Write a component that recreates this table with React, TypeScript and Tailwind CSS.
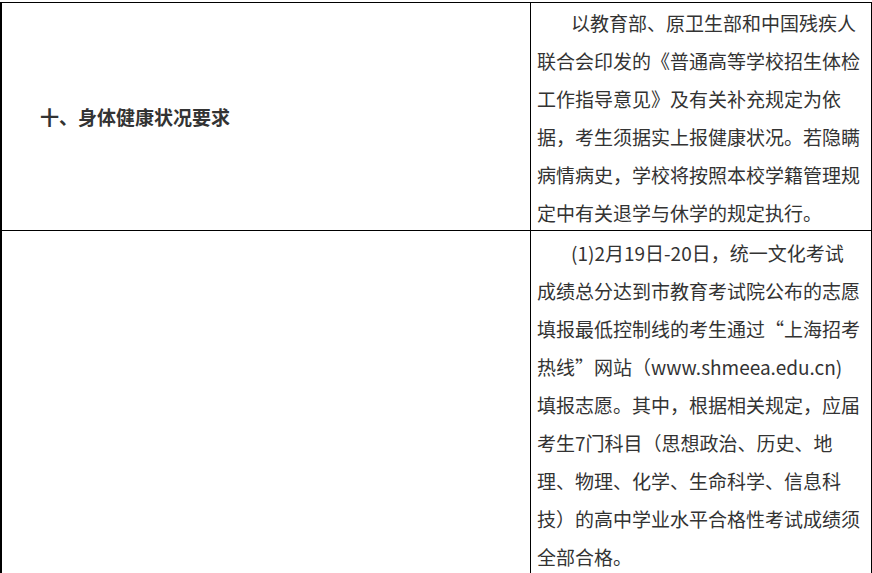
const firstRow = [
  "以教育部、原卫生部和中国残疾人",
  "联合会印发的《普通高等学校招生体检",
  "工作指导意见》及有关补充规定为依",
  "据，考生须据实上报健康状况。若隐瞒",
  "病情病史，学校将按照本校学籍管理规",
  "定中有关退学与休学的规定执行。",
];

const secondRow = [
  "(1)2月19日-20日，统一文化考试",
  "成绩总分达到市教育考试院公布的志愿",
  "填报最低控制线的考生通过“上海招考",
  "热线”网站（www.shmeea.edu.cn)",
  "填报志愿。其中，根据相关规定，应届",
  "考生7门科目（思想政治、历史、地",
  "理、物理、化学、生命科学、信息科",
  "技）的高中学业水平合格性考试成绩须",
  "全部合格。",
];

function CellText({ lines, offset }: { lines: string[]; offset: string }) {
  return (
    <div className={`pl-[6px] text-[19px] leading-[38px] text-[#333] ${offset}`}>
      {lines.map((line, i) => (
        <div key={i} className={i === 0 ? "whitespace-nowrap pl-[34px]" : "whitespace-nowrap"}>
          {line}
        </div>
      ))}
    </div>
  );
}

export default function App() {
  return (
    <div
      className="h-[573px] w-[872px] overflow-hidden bg-white pt-[2px]"
      style={{ fontFamily: '"Noto Sans CJK SC", "Microsoft YaHei", sans-serif' }}
    >
      <div className="border-t border-r border-l-2 border-black">
        <div className="flex h-[228px] border-b border-black">
          <div className="flex w-[529px] items-center border-r border-black pl-[38px] pt-[2px] text-[19px] font-bold text-[#333]">
            十、身体健康状况要求
          </div>
          <div className="flex-1">
            <CellText lines={firstRow} offset="pt-[1px]" />
          </div>
        </div>
        <div className="flex h-[360px]">
          <div className="w-[529px] border-r border-black" />
          <div className="flex-1">
            <CellText lines={secondRow} offset="pt-[3px]" />
          </div>
        </div>
      </div>
    </div>
  );
}
